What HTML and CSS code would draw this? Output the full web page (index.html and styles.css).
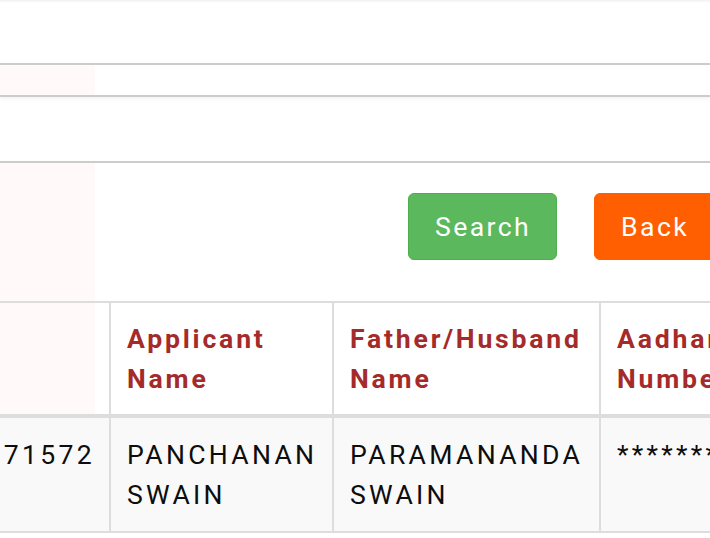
FILE: index.html
```html
<!DOCTYPE html>
<html lang="en">

<head>
  <meta charset="UTF-8" />
  <meta name="viewport" content="width=device-width, initial-scale=1.0" />
  <title>Applicant Search</title>
  <link rel="stylesheet" href="styles.css">
</head>

<body>
  <div class="topbar"></div>

  <div class="form-row short">
    <div class="label-cell"></div>
    <div class="field-cell"></div>
  </div>

  <div class="spacer"></div>

  <div class="form-row actions">
    <div class="label-cell"></div>
    <div class="field-cell buttons">
      <button type="button" class="btn btn-search">Search</button>
      <button type="button" class="btn btn-back">Back</button>
    </div>
  </div>

  <table class="results">
    <colgroup>
      <col class="col-id">
      <col class="col-name">
      <col class="col-father">
      <col class="col-aadhar">
    </colgroup>
    <thead>
      <tr>
        <th class="num"></th>
        <th>Applicant Name</th>
        <th>Father/Husband Name</th>
        <th>Aadhar Number</th>
      </tr>
    </thead>
    <tbody>
      <tr>
        <td class="num">71572</td>
        <td>PANCHANAN SWAIN</td>
        <td>PARAMANANDA SWAIN</td>
        <td>********</td>
      </tr>
    </tbody>
  </table>
</body>

</html>
```

FILE: styles.css
```css
html,
body {
  margin: 0;
  overflow: hidden;
}

body {
  font-family: Roboto, "Liberation Sans", Arial, sans-serif;
  background: #fff;
  color: #111;
}

* {
  box-sizing: border-box;
}

/* Top area with faint shadow from the header above */
.topbar {
  height: 63px;
  box-shadow: inset 0 3px 3px -2px rgba(0, 0, 0, 0.08);
}

.form-row {
  display: flex;
  border-top: 2px solid #ccc;
}

.form-row.short {
  height: 34px;
  border-bottom: 2px solid #ccc;
  box-shadow: 0 2px 3px rgba(0, 0, 0, 0.05);
}

.form-row.actions {
  height: 140px;
}

.label-cell {
  width: 95px;
  flex-shrink: 0;
  background: #fffaf9;
}

.field-cell {
  flex: 1;
}

.spacer {
  height: 64px;
}

/* Buttons */
.buttons {
  display: flex;
  align-items: flex-start;
  gap: 37px;
  padding: 30px 0 0 313px;
  white-space: nowrap;
}

.btn {
  font-family: inherit;
  font-size: 26.6px;
  line-height: 39px;
  letter-spacing: 2.4px;
  color: #fff;
  padding: 13px 25px 13px 26px;
  border: 1px solid transparent;
  border-radius: 6px;
  cursor: pointer;
  flex-shrink: 0;
}

.btn-search {
  background-color: #5cb85c;
  border-color: #4cae4c;
}

.btn-back {
  background-color: #ff5f00;
  border-color: #ff5f00;
}

/* Results table */
.results {
  table-layout: fixed;
  width: 900px;
  border-collapse: separate;
  border-spacing: 0;
  border-top: 2px solid #ddd;
}

.col-id {
  width: 111px;
}

.col-name {
  width: 223px;
}

.col-father {
  width: 267px;
}

.col-aadhar {
  width: 299px;
}

.results th,
.results td {
  font-size: 26.6px;
  line-height: 40px;
  padding: 16px 16px 15px 16px;
  text-align: left;
  vertical-align: top;
  border-right: 2px solid #ddd;
  border-bottom: 2px solid #ddd;
  white-space: normal;
}

.results th {
  color: #a52a2a;
  font-weight: 700;
  letter-spacing: 2.8px;
  border-bottom-width: 4px;
}

.results thead th.num {
  background: linear-gradient(to right, #fffaf9 95px, #fff 95px);
}

.results td {
  background: #f9f9f9;
  color: #0d0d0d;
  letter-spacing: 3.3px;
  padding-top: 17px;
  padding-bottom: 16px;
}

.results .num {
  text-align: right;
  padding-left: 0;
  padding-right: 14px;
}

.results th:nth-child(4) {
  padding-right: 120px;
}
```
